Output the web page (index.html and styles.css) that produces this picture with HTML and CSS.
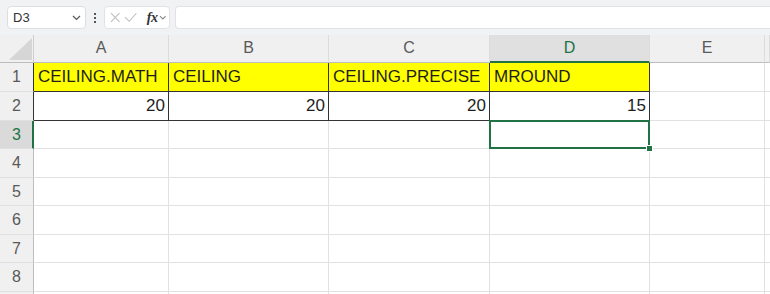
FILE: index.html
```html
<!DOCTYPE html>
<html lang="ja">
<head>
  <meta charset="UTF-8">
  <title>Sheet1</title>
  <link rel="stylesheet" href="styles.css">
</head>
<body>
  <!-- Formula bar -->
  <div class="toolbar">
    <div class="name-box">
      <span>D3</span>
      <svg class="chev" width="9" height="6" viewBox="0 0 9 6"><path d="M1 1l3.5 3.5L8 1" fill="none" stroke="#555" stroke-width="1.2"/></svg>
    </div>
    <div class="dots"><i></i><i></i><i></i></div>
    <div class="fx-box">
      <svg width="11" height="11" viewBox="0 0 11 11"><path d="M1 1l9 9M10 1l-9 9" stroke="#bdbdbd" stroke-width="1.1"/></svg>
      <svg width="14" height="11" viewBox="0 0 14 11"><path d="M1 5l4.5 4.5L13 1" fill="none" stroke="#bdbdbd" stroke-width="1.1"/></svg>
      <span class="fx">fx</span>
      <svg class="chev-s" width="8" height="5" viewBox="0 0 8 5"><path d="M1 1l3 3 3-3" fill="none" stroke="#888" stroke-width="1.1"/></svg>
    </div>
    <div class="formula"></div>
  </div>

  <!-- Grid -->
  <div class="sheet">
    <div class="row head">
      <div class="corner"><span class="tri"></span></div>
      <div class="col">A</div>
      <div class="col">B</div>
      <div class="col">C</div>
      <div class="col sel">D</div>
      <div class="col">E</div>
      <div class="col"></div>
    </div>
    <div class="row r29">
      <div class="num dark">1</div>
      <div class="cell hl">CEILING.MATH</div>
      <div class="cell hl">CEILING</div>
      <div class="cell hl">CEILING.PRECISE</div>
      <div class="cell hl">MROUND</div>
      <div class="cell"></div>
      <div class="cell"></div>
    </div>
    <div class="row r29">
      <div class="num dark">2</div>
      <div class="cell val">20</div>
      <div class="cell val">20</div>
      <div class="cell val">20</div>
      <div class="cell val">15</div>
      <div class="cell"></div>
      <div class="cell"></div>
    </div>
    <div class="row r28">
      <div class="num sel">3</div>
      <div class="cell"></div>
      <div class="cell"></div>
      <div class="cell"></div>
      <div class="cell active"></div>
      <div class="cell"></div>
      <div class="cell"></div>
    </div>
    <div class="row r29">
      <div class="num">4</div>
      <div class="cell"></div><div class="cell"></div><div class="cell"></div><div class="cell"></div><div class="cell"></div><div class="cell"></div>
    </div>
    <div class="row r28">
      <div class="num">5</div>
      <div class="cell"></div><div class="cell"></div><div class="cell"></div><div class="cell"></div><div class="cell"></div><div class="cell"></div>
    </div>
    <div class="row r29">
      <div class="num">6</div>
      <div class="cell"></div><div class="cell"></div><div class="cell"></div><div class="cell"></div><div class="cell"></div><div class="cell"></div>
    </div>
    <div class="row r28">
      <div class="num">7</div>
      <div class="cell"></div><div class="cell"></div><div class="cell"></div><div class="cell"></div><div class="cell"></div><div class="cell"></div>
    </div>
    <div class="row r29">
      <div class="num">8</div>
      <div class="cell"></div><div class="cell"></div><div class="cell"></div><div class="cell"></div><div class="cell"></div><div class="cell"></div>
    </div>
    <div class="row tail">
      <div class="num"></div>
      <div class="cell"></div><div class="cell"></div><div class="cell"></div><div class="cell"></div><div class="cell"></div><div class="cell"></div>
    </div>
  </div>
</body>
</html>
```

FILE: styles.css
```css
* {
  box-sizing: border-box;
  margin: 0;
  padding: 0;
}

body {
  width: 770px;
  height: 294px;
  overflow: hidden;
  background: #fff;
  font-family: "Liberation Sans", Arial, sans-serif;
  color: #222;
}

/* Formula bar */
.toolbar {
  height: 36px;
  background: #f1f2f4;
  display: flex;
  align-items: flex-start;
  padding: 6px 0 0 7px;
  border-bottom: 1px solid #e3e3e3;
}

.name-box {
  width: 79px;
  height: 23px;
  background: #fff;
  border: 1px solid #dedede;
  border-radius: 4px;
  display: flex;
  align-items: center;
  justify-content: space-between;
  padding: 0 4px 0 5px;
  font-size: 13px;
  color: #333;
}

.dots {
  width: 18px;
  height: 23px;
  display: flex;
  flex-direction: column;
  align-items: center;
  justify-content: center;
  gap: 2px;
}

.dots i {
  display: block;
  width: 2px;
  height: 2px;
  background: #555;
}

.fx-box {
  width: 66px;
  height: 23px;
  background: #fff;
  border: 1px solid #e2e2e2;
  border-radius: 4px;
  display: flex;
  align-items: center;
  padding: 0 2px 0 5px;
  gap: 4px;
}

.fx {
  font-family: "Liberation Serif", serif;
  font-style: italic;
  font-weight: bold;
  font-size: 14px;
  color: #333;
  margin-left: 5px;
  letter-spacing: -0.5px;
}

.chev-s {
  margin-left: -2px;
}

.formula {
  flex: 1;
  height: 23px;
  margin-left: 5px;
  background: #fff;
  border: 1px solid #e2e2e2;
  border-right: none;
  border-radius: 4px 0 0 4px;
}

/* Sheet grid */
.row {
  display: grid;
  grid-template-columns: 34px 135px 160px 161px 160px 115px 1fr;
}

.r28 { height: 28px; }
.r29 { height: 29px; }
.tail { height: 10px; }

.head {
  height: 28px;
  margin-top: -1px;
  background: #f0f0f0;
}

.corner {
  border-right: 1px solid #cfcfcf;
  border-bottom: 1px solid #bdbdbd;
  display: flex;
  justify-content: flex-end;
  align-items: flex-end;
  padding: 0 1px 2px 0;
}

.tri {
  width: 23px;
  height: 22px;
  background: #d6d6d6;
  clip-path: polygon(100% 0, 100% 100%, 0 100%);
}

.col {
  border-right: 1px solid #dcdcdc;
  border-bottom: 1px solid #bdbdbd;
  text-align: center;
  font-size: 16px;
  line-height: 26px;
  color: #595959;
}

.col.sel {
  background: #e0e0e0;
  color: #217346;
  border-bottom: 2px solid #217346;
  line-height: 25px;
}

.num {
  background: #f0f0f0;
  border-right: 1px solid #bdbdbd;
  border-bottom: 1px solid #e0e0e0;
  text-align: center;
  font-size: 16px;
  color: #595959;
  display: flex;
  align-items: center;
  justify-content: center;
}

.num.dark {
  border-right-color: #333;
}

.num.sel {
  background: #dadada;
  color: #217346;
  border-right: 2px solid #217346;
  padding-left: 1px;
}

.cell {
  border-right: 1px solid #e1e1e1;
  border-bottom: 1px solid #e1e1e1;
  font-size: 17px;
  display: flex;
  align-items: center;
  padding: 0 3px 0 4px;
  white-space: nowrap;
  color: #1e1e1e;
}

.cell.hl {
  background: #ffff00;
  border-color: #333;
}

.cell.val {
  justify-content: flex-end;
  border-color: #333;
}

/* Active cell D3 */
.cell.active {
  position: relative;
}

.cell.active::before {
  content: "";
  position: absolute;
  left: -1px;
  top: -1px;
  right: -1px;
  bottom: -1px;
  border: 2px solid #217346;
}

.cell.active::after {
  content: "";
  position: absolute;
  right: -4px;
  bottom: -4px;
  width: 5px;
  height: 5px;
  background: #217346;
  border: 1px solid #fff;
}
```
